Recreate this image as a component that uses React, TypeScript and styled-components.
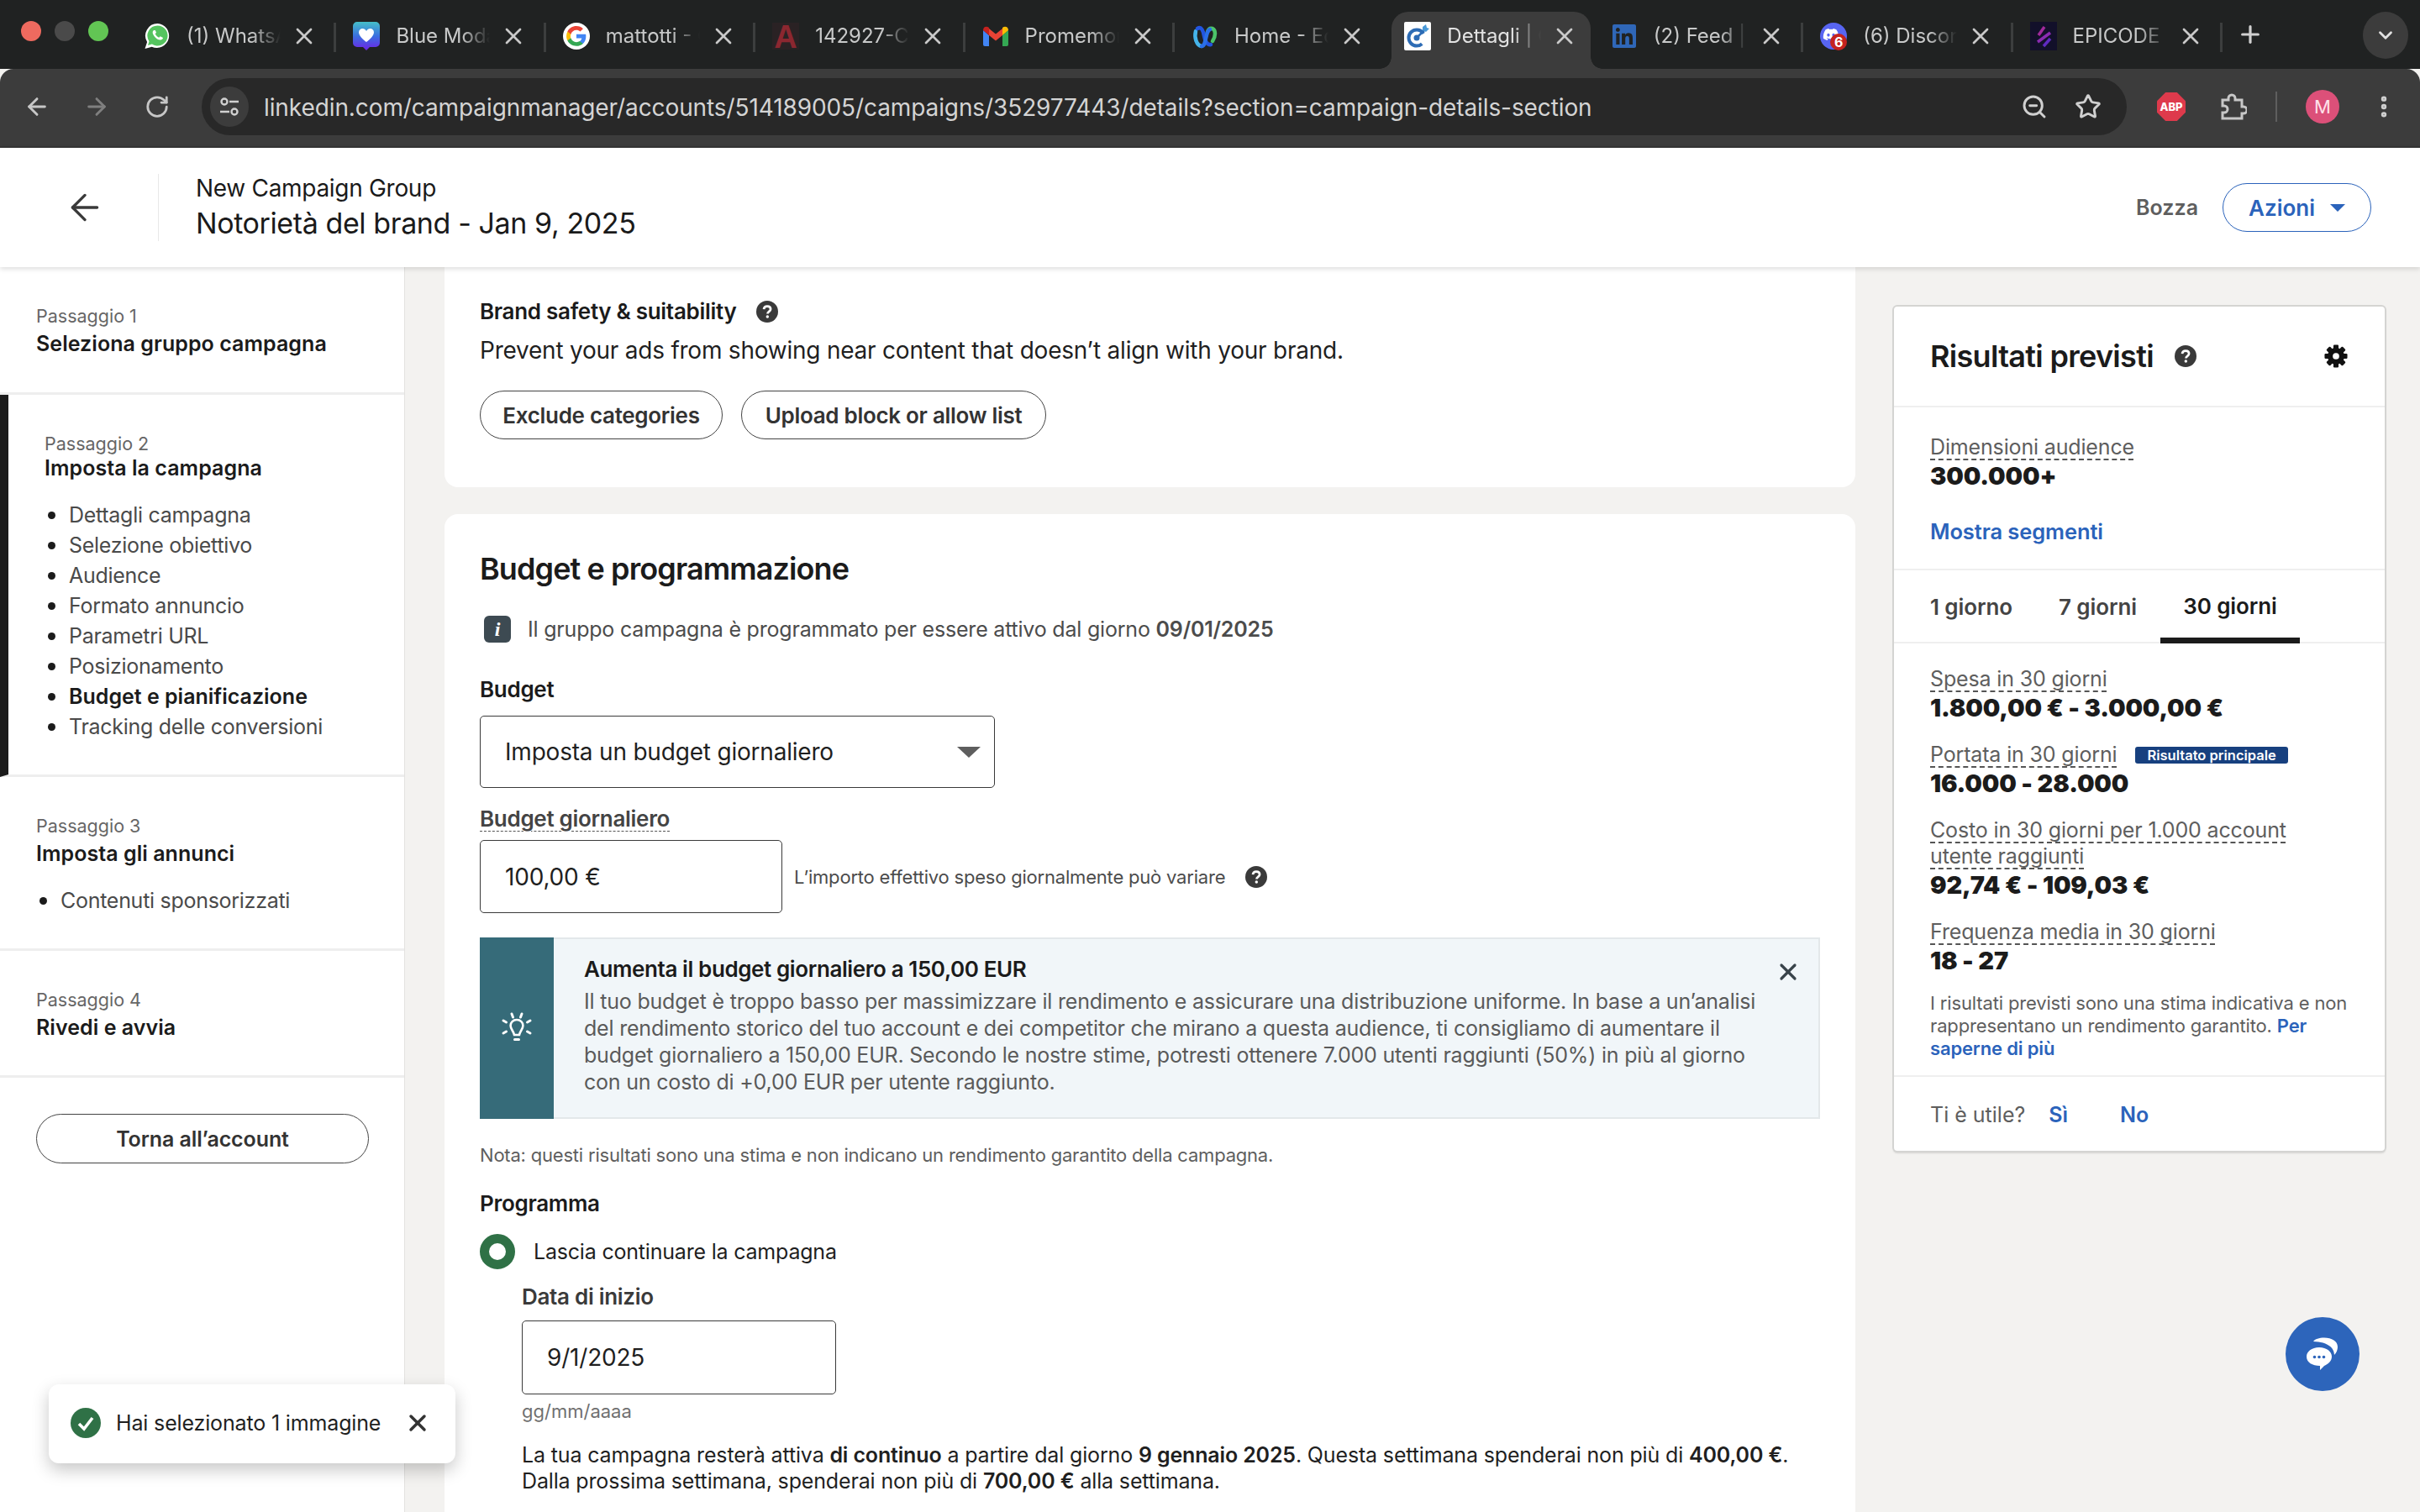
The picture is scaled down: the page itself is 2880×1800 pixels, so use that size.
import React from "react";
import styled, { createGlobalStyle } from "styled-components";
import { FaDiscord, FaLinkedin } from "react-icons/fa";
import { ArrowLeft, ArrowRight, ChevronDown, EllipsisVertical, Plus, RotateCw, Star, X, ZoomOut } from "lucide-react";

const GlobalStyle = createGlobalStyle`
  html, body {
    margin: 0;
    padding: 0;
    background: #f3f2f0;
  }
  * {
    box-sizing: border-box;
  }
  body {
    font-family: Inter, "Liberation Sans", sans-serif;
    color: #1a1a1a;
  }
`;

const Page = styled.div`
  width: 2880px;
  height: 1800px;
  overflow: hidden;
  position: relative;
  display: flex;
  flex-direction: column;
  background: #f3f2f0;
`;

/* browser chrome */
const TabStrip = styled.div`
  height: 82px;
  flex: none;
  background: #202222;
  display: flex;
  align-items: flex-start;
  padding-top: 14px;
  position: relative;
`;

const TrafficLights = styled.div`
  width: 150px;
  flex: none;
  display: flex;
  gap: 16px;
  padding: 11px 0 0 25px;
`;

const Light = styled.span<{ $color: string }>`
  width: 24px;
  height: 24px;
  border-radius: 50%;
  background: ${(p) => p.$color};
`;

const Tab = styled.div<{ $active?: boolean; $noSep?: boolean }>`
  width: 249.4px;
  height: 68px;
  flex: none;
  display: flex;
  align-items: flex-start;
  padding: 13px 0 0 ${(p) => (p.$active ? 25 : 21)}px;
  position: relative;
  color: ${(p) => (p.$active ? "#e2e2e2" : "#c8c9c9")};
  font-size: 24px;
  &::before {
    content: "";
    display: ${(p) => (p.$active ? "block" : "none")};
    position: absolute;
    left: 10px;
    right: 3px;
    top: 0;
    bottom: 0;
    background: #3c3c3c;
    border-radius: 20px 20px 0 0;
  }
  &::after {
    content: "";
    display: ${(p) => (p.$noSep && !p.$active ? "none" : "block")};
    position: absolute;
    ${(p) =>
      p.$active
        ? `left: -4px;
           right: -11px;
           bottom: 0;
           height: 14px;
           background:
             radial-gradient(circle at 0 0, transparent 13.5px, #3c3c3c 14px) left / 14px 14px no-repeat,
             radial-gradient(circle at 100% 0, transparent 13.5px, #3c3c3c 14px) right / 14px 14px no-repeat;`
        : `right: -1px;
           top: 13px;
           width: 3px;
           height: 35px;
           background: #3c3e3e;`}
  }
  > * {
    position: relative;
  }
`;

const Favicon = styled.span`
  width: 32px;
  height: 32px;
  flex: none;
  display: flex;
  align-items: center;
  justify-content: center;
`;

const TabTitle = styled.span`
  width: 112px;
  margin-left: 19px;
  line-height: 32px;
  overflow: hidden;
  white-space: nowrap;
  -webkit-mask-image: linear-gradient(to right, #000 70%, transparent 100%);
  mask-image: linear-gradient(to right, #000 70%, transparent 100%);
`;

const TabClose = styled.span`
  margin-left: 12px;
  height: 32px;
  display: flex;
  align-items: center;
  color: #c9c9c9;
`;

const NewTab = styled.span`
  margin: 11px 0 0 18px;
  color: #d0d0d0;
  display: flex;
`;

const TabSearch = styled.span`
  position: absolute;
  left: 2812px;
  top: 14px;
  width: 54px;
  height: 56px;
  border-radius: 50%;
  background: #3c3c3c;
  color: #e0e0e0;
  display: flex;
  align-items: center;
  justify-content: center;
`;

const Toolbar = styled.div`
  height: 94px;
  flex: none;
  background: #3c3c3c;
  border-bottom: 2px solid #353535;
  border-radius: 16px 16px 0 0;
  display: flex;
  align-items: center;
  padding: 0 0 2px 28px;
  color: #c7c7c7;
`;

const NavIcon = styled.span<{ $dim?: boolean; $w: number }>`
  width: ${(p) => p.$w}px;
  flex: none;
  display: flex;
  color: ${(p) => (p.$dim ? "#7f7f7f" : "#c7c7c7")};
`;

const Omnibox = styled.div`
  width: 2291px;
  height: 68px;
  flex: none;
  margin-left: -3px;
  border-radius: 34px;
  background: #282828;
  display: flex;
  align-items: center;
  padding-left: 10px;
`;

const SitePill = styled.span`
  width: 46px;
  height: 48px;
  flex: none;
  border-radius: 50%;
  background: #3c3c3c;
  display: flex;
  align-items: center;
  justify-content: center;
`;

const Url = styled.span`
  flex: 1;
  margin: 2px 0 0 18px;
  font-size: 28px;
  letter-spacing: -0.1px;
  color: #d4d4d4;
  white-space: nowrap;
`;

const OmniIcon = styled.span<{ $mr?: number; $ml?: number }>`
  display: flex;
  margin-right: ${(p) => p.$mr ?? 0}px;
  margin-left: ${(p) => p.$ml ?? 0}px;
  color: #d0d0d0;
`;

const ToolbarRight = styled.div`
  flex: 1;
  display: flex;
  align-items: center;
  padding-left: 36px;
`;

const Abp = styled.span`
  width: 34px;
  height: 34px;
  background: #de3a4c;
  clip-path: polygon(30% 0, 70% 0, 100% 30%, 100% 70%, 70% 100%, 30% 100%, 0 70%, 0 30%);
  color: #fff;
  font-size: 13px;
  font-weight: 800;
  display: flex;
  align-items: center;
  justify-content: center;
`;

const ToolbarDivider = styled.span`
  width: 2px;
  height: 36px;
  background: #5e5e5e;
  margin: 0 34px;
`;

const Avatar = styled.span`
  width: 40px;
  height: 40px;
  border-radius: 50%;
  background: #dc5079;
  color: #ffe2ea;
  font-size: 22px;
  display: flex;
  align-items: center;
  justify-content: center;
`;

/* page header */
const Header = styled.header`
  height: 142px;
  flex: none;
  background: #fff;
  position: relative;
  z-index: 2;
  box-shadow: 0 2px 6px rgba(0, 0, 0, 0.14);
  display: flex;
  align-items: center;
  padding-right: 58px;
`;

const BackCell = styled.div`
  width: 189px;
  height: 80px;
  flex: none;
  border-right: 1px solid #e8e8e8;
  display: flex;
  align-items: center;
  padding-left: 76px;
  color: #3a3a3a;
`;

const HeaderTitles = styled.div`
  flex: 1;
  padding-left: 44px;
`;

const GroupName = styled.div`
  font-size: 28px;
  line-height: 38px;
  letter-spacing: -0.3px;
`;

const CampaignName = styled.div`
  font-size: 34px;
  line-height: 46px;
  letter-spacing: -0.4px;
`;

const DraftLabel = styled.span`
  font-size: 25px;
  font-weight: 600;
  color: #5e5e5e;
  margin-right: 29px;
`;

const ActionsButton = styled.button`
  width: 177px;
  height: 58px;
  border: 1px solid #2b63bb;
  border-radius: 29px;
  background: #fff;
  color: #2b63bb;
  font: 600 26px Inter, sans-serif;
  display: flex;
  align-items: center;
  justify-content: center;
  gap: 18px;
`;

const Caret = styled.span`
  width: 0;
  height: 0;
  border-left: 9px solid transparent;
  border-right: 9px solid transparent;
  border-top: 9px solid #2b63bb;
`;

/* body */
const Body = styled.div`
  flex: 1;
  min-height: 0;
  display: grid;
  grid-template-columns: 482px 1726px 1fr;
`;

const Sidebar = styled.aside`
  background: #fff;
  border-right: 1px solid #e3e2e0;
  display: flex;
  flex-direction: column;
`;

const Step = styled.section<{ $height: number; $active?: boolean }>`
  height: ${(p) => p.$height}px;
  flex: none;
  border-bottom: 3px solid #eeeeee;
  border-left: ${(p) => (p.$active ? "10px solid #1b1b1b" : "0")};
  padding: 43px 0 0 43px;
`;

const StepLabel = styled.div`
  font-size: 21.500px;
  line-height: 30px;
  color: #666;
`;

const StepTitle = styled.div<{ $tight?: boolean }>`
  font-size: 25px;
  line-height: 36px;
  margin-top: ${(p) => (p.$tight ? -4 : 0)}px;
  font-weight: 600;
  color: #1b1b1b;
  letter-spacing: 0.05px;
`;

const StepList = styled.ul`
  margin: 20px 0 0;
  padding: 0 0 0 29px;
  list-style: none;
`;

const StepItem = styled.li<{ $current?: boolean }>`
  font-size: 25px;
  line-height: 36px;
  color: ${(p) => (p.$current ? "#1b1b1b" : "#4a4a4a")};
  font-weight: ${(p) => (p.$current ? 600 : 400)};
  letter-spacing: ${(p) => (p.$current ? "0" : "-0.28px")};
  position: relative;
  &::before {
    content: "";
    position: absolute;
    left: -25px;
    top: 14px;
    width: 9px;
    height: 9px;
    border-radius: 50%;
    background: #1b1b1b;
  }
`;

const BackToAccount = styled.button`
  width: 396px;
  height: 59px;
  margin: 43px 0 0 43px;
  border: 1px solid #444;
  border-radius: 30px;
  background: #fff;
  color: #333;
  font: 600 25px Inter, sans-serif;
  letter-spacing: -0.1px;
`;

const Center = styled.main`
  padding-left: 47px;
  display: flex;
  flex-direction: column;
  gap: 32px;
  min-width: 0;
`;

const Card = styled.div`
  background: #fff;
  border-radius: 16px;
  padding: 0 42px;
  flex: none;
  width: 1679px;
`;

const TopCard = styled(Card)`
  height: 262px;
  border-radius: 0 0 16px 16px;
  padding-top: 36px;
`;

const InlineRow = styled.div<{ $gap?: number }>`
  display: flex;
  align-items: center;
  gap: ${(p) => p.$gap ?? 0}px;
`;

const FieldLabel = styled.div<{ $color?: string; $mt?: number }>`
  font-size: 26px;
  line-height: 34px;
  font-weight: 600;
  letter-spacing: -0.3px;
  margin-top: ${(p) => p.$mt ?? 0}px;
  color: ${(p) => p.$color ?? "#1b1b1b"};
`;

const Lead = styled.div`
  font-size: 28px;
  line-height: 38px;
  letter-spacing: -0.23px;
  color: #1f1f1f;
  margin-top: 10px;
`;

const PillRow = styled.div`
  display: flex;
  gap: 22px;
  margin-top: 29px;
`;

const PillButton = styled.button<{ $w: number }>`
  width: ${(p) => p.$w}px;
  height: 58px;
  border: 1px solid #444;
  border-radius: 29px;
  background: #fff;
  color: #333;
  font: 600 26px Inter, sans-serif;
  letter-spacing: -0.3px;
`;

const MainCard = styled(Card)`
  flex: 1;
  border-radius: 16px 16px 0 0;
  padding-top: 43px;
`;

const SectionTitle = styled.h2`
  margin: 0;
  font-size: 36px;
  line-height: 44px;
  font-weight: 600;
  letter-spacing: -0.9px;
  color: #1b1b1b;
`;

const InfoRow = styled.div`
  display: flex;
  align-items: center;
  margin: 33px 0 0 5px;
  font-size: 25px;
  line-height: 34px;
  color: #4c4c4c;
  letter-spacing: -0.2px;
  gap: 20px;
  b {
    font-weight: 600;
  }
`;

const InfoBadge = styled.span`
  width: 32px;
  height: 32px;
  border-radius: 6px;
  background: #3d4a52;
  color: #fff;
  display: flex;
  align-items: center;
  justify-content: center;
  font: italic 700 24px "Liberation Serif", serif;
`;

const SelectBox = styled.div`
  width: 613px;
  height: 86px;
  margin-top: 14px;
  border: 1px solid #3a3a3a;
  border-radius: 5px;
  display: flex;
  align-items: center;
  justify-content: space-between;
  padding: 0 16px 0 29px;
  font-size: 28px;
  letter-spacing: -0.2px;
  color: #1f1f1f;
`;

const SelectCaret = styled.span`
  width: 0;
  height: 0;
  border-left: 14px solid transparent;
  border-right: 14px solid transparent;
  border-top: 13px solid #5e5e5e;
`;

const Dashed = styled.span<{ $thin?: boolean }>`
  text-decoration: underline dashed #555 ${(p) => (p.$thin ? 1 : 2)}px;
  text-underline-offset: 5px;
`;

const BudgetRow = styled.div`
  display: flex;
  align-items: center;
  margin-top: 8px;
`;

const TextBox = styled.div<{ $w: number }>`
  width: ${(p) => p.$w}px;
  height: 87px;
  flex: none;
  border: 1px solid #3a3a3a;
  border-radius: 5px;
  display: flex;
  align-items: center;
  padding-left: 29px;
  font-size: 28px;
  color: #1f1f1f;
  letter-spacing: -0.2px;
`;

const Hint = styled.span`
  margin: 0 24px 0 14px;
  font-size: 22px;
  color: #4c4c4c;
  letter-spacing: -0.2px;
`;

const Banner = styled.div`
  height: 216px;
  margin-top: 29px;
  display: flex;
  background: #f1f6f9;
  border: 2px solid #e3e8ea;
  border-left: 0;
  position: relative;
`;

const BannerIcon = styled.div`
  width: 88px;
  flex: none;
  background: #366b79;
  margin-top: -2px;
  margin-bottom: -2px;
  display: flex;
  align-items: center;
  justify-content: center;
  color: #fff;
`;

const BannerText = styled.div`
  padding: 20px 0 0 36px;
`;

const BannerHeading = styled.div`
  font-size: 26px;
  line-height: 32px;
  font-weight: 600;
  letter-spacing: -0.4px;
  color: #1b1b1b;
  margin-bottom: 6px;
`;

const BannerCopy = styled.div`
  font-size: 25px;
  line-height: 32px;
  color: #5a5a5a;
  letter-spacing: -0.2px;
  white-space: nowrap;
`;

const BannerClose = styled.span`
  position: absolute;
  right: 20px;
  top: 23px;
  color: #38434a;
  display: flex;
`;

const Note = styled.div`
  margin-top: 28px;
  font-size: 22px;
  line-height: 30px;
  color: #5e5e5e;
  letter-spacing: -0.2px;
`;

const RadioRow = styled.div`
  display: flex;
  align-items: center;
  gap: 22px;
  margin-top: 19px;
  font-size: 25px;
  color: #1f1f1f;
  letter-spacing: -0.2px;
`;

const Radio = styled.span`
  width: 42px;
  height: 42px;
  border-radius: 50%;
  border: 11px solid #2f7146;
  background: #fff;
  flex: none;
`;

const Indented = styled.div`
  padding-left: 50px;
`;

const DateBox = styled(TextBox)`
  margin-top: 11px;
  height: 88px;
`;

const DateHint = styled.div`
  margin-top: 5px;
  font-size: 22px;
  line-height: 30px;
  color: #707070;
`;

const Summary = styled.div`
  margin-top: 22px;
  font-size: 25px;
  line-height: 31px;
  letter-spacing: -0.15px;
  color: #1f1f1f;
  b {
    font-weight: 600;
  }
`;

const RightColumn = styled.div`
  padding: 47px 0 0 46px;
`;

const ResultsCard = styled.div`
  width: 584px;
  height: 1005px;
  background: #fff;
  border-radius: 4px;
  box-shadow: 0 0 0 2px #d4d4d2, 0 2px 3px rgba(0, 0, 0, 0.25);
`;

const ResultsHead = styled.div`
  height: 120px;
  border-bottom: 2px solid #efefef;
  display: flex;
  align-items: center;
  padding: 0 44px 0 43px;
`;

const ResultsTitle = styled.h3`
  margin: 0;
  flex: 1;
  font-size: 36px;
  font-weight: 600;
  letter-spacing: -0.7px;
  color: #1b1b1b;
  display: flex;
  align-items: center;
  gap: 25px;
`;

const AudienceBlock = styled.div`
  height: 194px;
  border-bottom: 2px solid #efefef;
  padding: 32px 0 0 43px;
`;

const MetricLabel = styled.div`
  font-size: 25px;
  line-height: 31px;
  color: #5e5e5e;
  letter-spacing: -0.15px;
`;

const MetricValue = styled.div`
  font-size: 29px;
  line-height: 34px;
  margin-top: 2px;
  font-weight: 900;
  color: #1b1b1b;
  letter-spacing: -0.15px;
`;

const LinkText = styled.div`
  margin-top: 32px;
  font-size: 25.500px;
  line-height: 34px;
  font-weight: 600;
  color: #2b63bb;
  letter-spacing: -0.1px;
`;

const PeriodTabs = styled.div`
  height: 87px;
  border-bottom: 2px solid #efefef;
  display: flex;
  padding-left: 43px;
`;

const PeriodTab = styled.div<{ $active?: boolean; $w: number }>`
  width: ${(p) => p.$w}px;
  height: 87px;
  flex: none;
  display: flex;
  align-items: center;
  justify-content: ${(p) => (p.$active ? "center" : "flex-start")};
  padding-top: ${(p) => (p.$active ? 5 : 0)}px;
  font-size: 26px;
  font-weight: 600;
  letter-spacing: -0.1px;
  color: ${(p) => (p.$active ? "#1b1b1b" : "#444")};
  border-bottom: ${(p) => (p.$active ? "7px solid #1b1b1b" : "0")};
`;

const Metrics = styled.div`
  height: 516px;
  border-bottom: 2px solid #efefef;
  padding: 27px 30px 0 43px;
`;

const Metric = styled.div`
  margin-bottom: 23px;
`;

const LabelRow = styled.div`
  display: flex;
  align-items: center;
  gap: 22px;
`;

const PrimaryBadge = styled.span`
  height: 20px;
  padding: 0 14px;
  border-radius: 3px;
  background: #17407f;
  color: #fff;
  font-size: 16.500px;
  font-weight: 600;
  line-height: 20px;
`;

const Disclaimer = styled.div`
  margin-top: -3px;
  font-size: 22px;
  line-height: 27px;
  color: #5e5e5e;
  letter-spacing: -0.15px;
  a {
    color: #2b63bb;
    font-weight: 600;
  }
`;

const Feedback = styled.div`
  height: 86px;
  display: flex;
  align-items: center;
  padding: 4px 0 0 43px;
  font-size: 25px;
  color: #5e5e5e;
`;

const FeedbackLink = styled.a<{ $ml: number }>`
  margin-left: ${(p) => p.$ml}px;
  color: #2b63bb;
  font-weight: 600;
`;

/* floating bits */
const Toast = styled.div`
  position: absolute;
  left: 58px;
  top: 1648px;
  width: 484px;
  height: 94px;
  z-index: 3;
  background: #fff;
  border-radius: 12px;
  box-shadow: 0 8px 20px rgba(0, 0, 0, 0.22);
  display: flex;
  align-items: center;
  padding: 0 0 3px 26px;
  font-size: 25px;
  letter-spacing: -0.15px;
  color: #1f1f1f;
  gap: 18px;
`;

const ToastClose = styled.span`
  margin-left: 10px;
  color: #333;
  display: flex;
`;

const ChatButton = styled.div`
  position: absolute;
  left: 2720px;
  top: 1568px;
  width: 88px;
  height: 88px;
  border-radius: 50%;
  background: #2d65bb;
  display: flex;
`;

const DiscordWrap = styled.span`
  position: relative;
  display: flex;
`;

const DiscordGlyph = styled.span`
  position: absolute;
  left: 3px;
  top: 4px;
  display: flex;
`;

const DiscordCount = styled.span`
  position: absolute;
  right: 0;
  bottom: -1px;
  width: 20px;
  height: 20px;
  border-radius: 50%;
  background: #c5221f;
  color: #fff;
  font-size: 16px;
  font-weight: 700;
  display: flex;
  align-items: center;
  justify-content: center;
`;

function HelpIcon({ size = 26, color = "#3a3a3a" }: { size?: number; color?: string }) {
  return (
    <svg width={size} height={size} viewBox="0 0 24 24">
      <circle cx="12" cy="12" r="12" fill={color} />
      <path d="M8.300 9.400c.2-2 1.800-3.200 3.800-3.200 2.100 0 3.700 1.200 3.700 3.100 0 2.600-3.200 2.600-3.400 5" fill="none" stroke="#fff" strokeWidth="2.500" />
      <circle cx="12.300" cy="17.600" r="1.600" fill="#fff" />
    </svg>
  );
}

function GearIcon() {
  return (
    <svg width="28" height="28" viewBox="0 0 24 24">
      <g fill="#111">
        <circle cx="12" cy="12" r="8.600" />
        {[0, 45, 90, 135, 180, 225, 270, 315].map((a) => (
          <rect key={a} x="9.400" y="0.400" width="5.200" height="6" rx="1" transform={`rotate(${a} 12 12)`} />
        ))}
      </g>
      <circle cx="12" cy="12" r="3.300" fill="#fff" />
    </svg>
  );
}

function BulbIcon() {
  return (
    <svg width="38" height="38" viewBox="0 0 38 38" fill="none" stroke="#fff" strokeWidth="2.600" strokeLinecap="round">
      <path d="M19 9c-4.500 0-7.400 3.200-7.400 7 0 4 3.400 6.200 4.400 11h6c1-4.800 4.400-7 4.400-11 0-3.800-2.900-7-7.400-7z" />
      <path d="M16.500 32.500h5M13 2l1.500 4M25 2l-1.500 4M3 10l3.500 2M35 10l-3.500 2M3 25l3.500-2M35 25l-3.500-2" strokeWidth="3" />
    </svg>
  );
}

function SiteSettingsIcon() {
  return (
    <svg width="26" height="26" viewBox="0 0 26 26" fill="none" stroke="#d0d0d0" strokeWidth="2.400">
      <circle cx="7" cy="7" r="3.500" />
      <path d="M13 7h11M2 19h11" />
      <circle cx="19" cy="19" r="3.500" />
    </svg>
  );
}

function ExtensionIcon() {
  return (
    <svg width="34" height="34" viewBox="0 0 34 34" fill="none" stroke="#c7c7c7" strokeWidth="3">
      <path d="M5 9h7V7a4 4 0 0 1 8 0v2h8v8h2a4 4 0 0 1 0 8h-2v6H5v-7h2a4 4 0 0 0 0-8H5z" />
    </svg>
  );
}

function WhatsappFav() {
  return (
    <svg width="34" height="34" viewBox="0 0 32 32">
      <path d="M16.500 1a14.500 14.500 0 0 0-12.400 22L1.500 31l8.200-2.300A14.500 14.500 0 1 0 16.500 1z" fill="#fff" />
      <path d="M16.500 3.500a12 12 0 0 0-10 18.700L5 27l4.900-1.500A12 12 0 1 0 16.500 3.500z" fill="#55c45f" />
      <path d="M12 9c-2 1.500-1.800 4 .5 7 2.500 3.300 5.500 5 8 4.500 1.500-.3 2.500-1.500 2.500-2.500l-3.300-1.800-1.500 1.500c-2-.8-3.500-2.500-4.500-4.500l1.300-1.500L13.700 9z" fill="#fff" />
    </svg>
  );
}

function BlueModFav() {
  return (
    <svg width="32" height="34" viewBox="0 0 32 34">
      <defs>
        <linearGradient id="bm" x1="0" y1="0" x2="0" y2="1">
          <stop offset="0" stopColor="#45bfc9" />
          <stop offset="0.5" stopColor="#3a6fe0" />
          <stop offset="1" stopColor="#6f22e6" />
        </linearGradient>
      </defs>
      <path d="M5 0h22a5 5 0 0 1 5 5v20a5 5 0 0 1-5 5h-7l-4 4-4-4H5a5 5 0 0 1-5-5V5a5 5 0 0 1 5-5z" fill="url(#bm)" />
      <path d="M16 24S7 18 7 12.500C7 9.500 9.300 8 11.300 8c2 0 3.700 1.300 4.700 3 1-1.700 2.700-3 4.700-3 2 0 4.300 1.500 4.300 4.500C25 18 16 24 16 24z" fill="#fff" />
    </svg>
  );
}

function GoogleFav() {
  return (
    <svg width="32" height="32" viewBox="0 0 48 48">
      <circle cx="24" cy="24" r="24" fill="#fff" />
      <g transform="translate(4.500 4.500) scale(.81)">
        <path fill="#4285f4" d="M45.100 24.500c0-1.600-.1-3.100-.4-4.500H24v8.500h11.800c-.5 2.800-2 5.100-4.400 6.700v5.600h7.100c4.200-3.800 6.600-9.500 6.600-16.300z" />
        <path fill="#34a853" d="M24 46c5.900 0 10.900-2 14.500-5.300l-7.100-5.500c-2 1.300-4.500 2.100-7.400 2.100-5.700 0-10.500-3.800-12.300-9h-7.300v5.700C8 41.100 15.400 46 24 46z" />
        <path fill="#fbbc05" d="M11.700 28.300c-.4-1.300-.7-2.700-.7-4.300s.3-3 .7-4.300V14H4.400C2.900 17 2 20.400 2 24s.9 7 2.400 10l7.300-5.700z" />
        <path fill="#ea4335" d="M24 10.700c3.200 0 6.100 1.100 8.400 3.300l6.300-6.300C34.900 4.200 29.900 2 24 2 15.400 2 8 6.900 4.400 14l7.300 5.700c1.800-5.200 6.600-9 12.300-9z" />
      </g>
    </svg>
  );
}

function AcrobatFav() {
  return (
    <svg width="32" height="32" viewBox="0 0 32 32">
      <rect width="32" height="32" fill="#2a2224" />
      <text x="16" y="30" textAnchor="middle" fontFamily="Liberation Sans" fontWeight="700" fontSize="38" fill="#8c2730">A</text>
    </svg>
  );
}

function GmailFav() {
  return (
    <svg width="32" height="32" viewBox="0 0 32 32">
      <path d="M1 9v17a2 2 0 0 0 2 2h5V15z" fill="#4285f4" />
      <path d="M24 15v13h5a2 2 0 0 0 2-2V9z" fill="#34a853" />
      <path d="M8 15V7l8 6.500L24 7v8l-8 6.500z" fill="#ea4335" />
      <path d="M1 9c0-4 4-5.500 7-3v9z" fill="#c5221f" />
      <path d="M24 6c3-2.500 7-1 7 3l-7 6z" fill="#fbbc05" />
    </svg>
  );
}

function HomeFav() {
  return (
    <svg width="32" height="32" viewBox="0 0 32 32" fill="none" strokeWidth="4.500" strokeLinecap="round">
      <path d="M5 10c-2 8 1 17 7 18" stroke="#45b4ea" />
      <path d="M25 22c4-6 4-13 0-15-3-1-5 1-6 4" stroke="#4cc46a" />
      <path d="M7 7c5-3 7 3 8 9 1 6 4 11 8 10" stroke="#2255e0" />
      <path d="M12 28c6 0 4-18 10-20" stroke="#2a6fe8" />
    </svg>
  );
}

function TargetFav() {
  return (
    <svg width="32" height="34" viewBox="0 0 32 34">
      <rect width="32" height="34" rx="2" fill="#fff" />
      <circle cx="15" cy="19" r="9.500" fill="none" stroke="#2d6cb5" strokeWidth="4" strokeDasharray="46 14" strokeDashoffset="-8" />
      <circle cx="15" cy="19" r="3.500" fill="#2d6cb5" />
      <path d="M15 19l10-10" stroke="#2d6cb5" strokeWidth="2.500" />
      <path d="M22 6l4-3 1 4 3 1-4 4-4-2z" fill="#4a9ad8" />
    </svg>
  );
}

function DiscordFav() {
  return (
    <DiscordWrap>
      <svg width="32" height="32" viewBox="0 0 32 32">
        <circle cx="16" cy="16" r="16" fill="#5865f2" />
      </svg>
      <DiscordGlyph>
        <FaDiscord size={20} color="#fff" />
      </DiscordGlyph>
      <DiscordCount>6</DiscordCount>
    </DiscordWrap>
  );
}

function EpicodeFav() {
  return (
    <svg width="32" height="34" viewBox="0 0 32 34" fill="none" strokeWidth="3.500">
      <rect width="32" height="34" fill="#12102a" />
      <path d="M17 6l-7 10" stroke="#a12a9c" />
      <path d="M24 13L9 24" stroke="#8a2bb0" />
      <path d="M24 20l-8 9" stroke="#5f2bc0" />
    </svg>
  );
}

function ChatIcon() {
  return (
    <svg width="88" height="88" viewBox="0 0 88 88">
      <path d="M33 29c2-3 7-4.500 13-4.500 9 0 16 4 16 11 0 3.500-1.500 7-4 9.500 0-8-7-15.500-25-16z" fill="#fff" />
      <path d="M25 47c0-6 6-11 15-11s15 5 15 11c0 6-5 9-9 11l-5 5v-5c-9 0-16-4-16-11z" fill="#fff" />
      <circle cx="34.500" cy="47.500" r="1.800" fill="#2d65bb" />
      <circle cx="40" cy="47.500" r="1.800" fill="#2d65bb" />
      <circle cx="45.500" cy="47.500" r="1.800" fill="#2d65bb" />
    </svg>
  );
}

const tabs = [
  { title: "(1) WhatsApp", icon: <WhatsappFav /> },
  { title: "Blue Moda", icon: <BlueModFav /> },
  { title: "mattotti - Ce", icon: <GoogleFav /> },
  { title: "142927-Cat", icon: <AcrobatFav /> },
  { title: "Promemoria", icon: <GmailFav /> },
  { title: "Home - Edit", icon: <HomeFav />, noSep: true },
  { title: "Dettagli | Ca", icon: <TargetFav />, active: true },
  { title: "(2) Feed | Li", icon: <FaLinkedin size={32} color="#2f67b8" /> },
  { title: "(6) Discord", icon: <DiscordFav /> },
  { title: "EPICODE", icon: <EpicodeFav /> },
];

const stepTwoItems = [
  "Dettagli campagna",
  "Selezione obiettivo",
  "Audience",
  "Formato annuncio",
  "Parametri URL",
  "Posizionamento",
  "Budget e pianificazione",
  "Tracking delle conversioni",
];

export default function App() {
  return (
    <Page>
      <GlobalStyle />
      <TabStrip>
        <TrafficLights>
          <Light $color="#ee6a5f" />
          <Light $color="#4a4a4a" />
          <Light $color="#62c554" />
        </TrafficLights>
        {tabs.map((t) => (
          <Tab key={t.title} $active={t.active} $noSep={t.noSep}>
            <Favicon>{t.icon}</Favicon>
            <TabTitle>{t.title}</TabTitle>
            <TabClose>
              <X size={32} strokeWidth={2} />
            </TabClose>
          </Tab>
        ))}
        <NewTab>
          <Plus size={32} strokeWidth={2.4} />
        </NewTab>
        <TabSearch>
          <ChevronDown size={26} strokeWidth={2.6} />
        </TabSearch>
      </TabStrip>

      <Toolbar>
        <NavIcon $w={71}>
          <ArrowLeft size={32} strokeWidth={2.2} />
        </NavIcon>
        <NavIcon $w={73} $dim>
          <ArrowRight size={32} strokeWidth={2.2} />
        </NavIcon>
        <NavIcon $w={71}>
          <RotateCw size={30} strokeWidth={2.2} />
        </NavIcon>
        <Omnibox>
          <SitePill>
            <SiteSettingsIcon />
          </SitePill>
          <Url>linkedin.com/campaignmanager/accounts/514189005/campaigns/352977443/details?section=campaign-details-section</Url>
          <OmniIcon $mr={32}>
            <ZoomOut size={32} strokeWidth={2.2} />
          </OmniIcon>
          <OmniIcon $mr={30}>
            <Star size={32} strokeWidth={2.2} />
          </OmniIcon>
        </Omnibox>
        <ToolbarRight>
          <Abp>ABP</Abp>
          <OmniIcon $ml={39}>
            <ExtensionIcon />
          </OmniIcon>
          <ToolbarDivider />
          <Avatar>M</Avatar>
          <OmniIcon $ml={37}>
            <EllipsisVertical size={32} strokeWidth={2.8} />
          </OmniIcon>
        </ToolbarRight>
      </Toolbar>

      <Header>
        <BackCell>
          <ArrowLeft size={50} strokeWidth={1.6} />
        </BackCell>
        <HeaderTitles>
          <GroupName>New Campaign Group</GroupName>
          <CampaignName>Notorietà del brand - Jan 9, 2025</CampaignName>
        </HeaderTitles>
        <DraftLabel>Bozza</DraftLabel>
        <ActionsButton>
          Azioni
          <Caret />
        </ActionsButton>
      </Header>

      <Body>
        <Sidebar>
          <Step $height={152}>
            <StepLabel>Passaggio 1</StepLabel>
            <StepTitle>Seleziona gruppo campagna</StepTitle>
          </Step>
          <Step $height={455} $active>
            <StepLabel>Passaggio 2</StepLabel>
            <StepTitle $tight>Imposta la campagna</StepTitle>
            <StepList>
              {stepTwoItems.map((item) => (
                <StepItem key={item} $current={item === "Budget e pianificazione"}>
                  {item}
                </StepItem>
              ))}
            </StepList>
          </Step>
          <Step $height={207}>
            <StepLabel>Passaggio 3</StepLabel>
            <StepTitle>Imposta gli annunci</StepTitle>
            <StepList>
              <StepItem>Contenuti sponsorizzati</StepItem>
            </StepList>
          </Step>
          <Step $height={151}>
            <StepLabel>Passaggio 4</StepLabel>
            <StepTitle>Rivedi e avvia</StepTitle>
          </Step>
          <BackToAccount>Torna all’account</BackToAccount>
        </Sidebar>

        <Center>
          <TopCard>
            <InlineRow $gap={24}>
              <FieldLabel>Brand safety &amp; suitability</FieldLabel>
              <HelpIcon />
            </InlineRow>
            <Lead>Prevent your ads from showing near content that doesn’t align with your brand.</Lead>
            <PillRow>
              <PillButton $w={289}>Exclude categories</PillButton>
              <PillButton $w={363}>Upload block or allow list</PillButton>
            </PillRow>
          </TopCard>
          <MainCard>
            <SectionTitle>Budget e programmazione</SectionTitle>
            <InfoRow>
              <InfoBadge>i</InfoBadge>
              <span>
                Il gruppo campagna è programmato per essere attivo dal giorno <b>09/01/2025</b>
              </span>
            </InfoRow>
            <FieldLabel $mt={38}>Budget</FieldLabel>
            <SelectBox>
              Imposta un budget giornaliero
              <SelectCaret />
            </SelectBox>
            <FieldLabel $mt={20} $color="#444">
              <Dashed $thin>Budget giornaliero</Dashed>
            </FieldLabel>
            <BudgetRow>
              <TextBox $w={360}>100,00 €</TextBox>
              <Hint>L’importo effettivo speso giornalmente può variare</Hint>
              <HelpIcon />
            </BudgetRow>
            <Banner>
              <BannerIcon>
                <BulbIcon />
              </BannerIcon>
              <BannerText>
                <BannerHeading>Aumenta il budget giornaliero a 150,00 EUR</BannerHeading>
                <BannerCopy>
                  Il tuo budget è troppo basso per massimizzare il rendimento e assicurare una distribuzione uniforme. In base a un’analisi
                  <br />
                  del rendimento storico del tuo account e dei competitor che mirano a questa audience, ti consigliamo di aumentare il
                  <br />
                  budget giornaliero a 150,00 EUR. Secondo le nostre stime, potresti ottenere 7.000 utenti raggiunti (50%) in più al giorno
                  <br />
                  con un costo di +0,00 EUR per utente raggiunto.
                </BannerCopy>
              </BannerText>
              <BannerClose>
                <X size={32} strokeWidth={2.4} />
              </BannerClose>
            </Banner>
            <Note>Nota: questi risultati sono una stima e non indicano un rendimento garantito della campagna.</Note>
            <FieldLabel $mt={26}>Programma</FieldLabel>
            <RadioRow>
              <Radio />
              Lascia continuare la campagna
            </RadioRow>
            <Indented>
              <FieldLabel $mt={16} $color="#3a3a3a">Data di inizio</FieldLabel>
              <DateBox $w={374}>9/1/2025</DateBox>
              <DateHint>gg/mm/aaaa</DateHint>
              <Summary>
                La tua campagna resterà attiva <b>di continuo</b> a partire dal giorno <b>9 gennaio 2025</b>. Questa settimana spenderai non più di <b>400,00 €</b>.
                <br />
                Dalla prossima settimana, spenderai non più di <b>700,00 €</b> alla settimana.
              </Summary>
            </Indented>
          </MainCard>
        </Center>

        <RightColumn>
          <ResultsCard>
            <ResultsHead>
              <ResultsTitle>
                Risultati previsti
                <HelpIcon />
              </ResultsTitle>
              <GearIcon />
            </ResultsHead>
            <AudienceBlock>
              <MetricLabel>
                <Dashed>Dimensioni audience</Dashed>
              </MetricLabel>
              <MetricValue>300.000+</MetricValue>
              <LinkText>Mostra segmenti</LinkText>
            </AudienceBlock>
            <PeriodTabs>
              <PeriodTab $w={153}>1 giorno</PeriodTab>
              <PeriodTab $w={121}>7 giorni</PeriodTab>
              <PeriodTab $w={166} $active>30 giorni</PeriodTab>
            </PeriodTabs>
            <Metrics>
              <Metric>
                <MetricLabel>
                  <Dashed>Spesa in 30 giorni</Dashed>
                </MetricLabel>
                <MetricValue>1.800,00 € - 3.000,00 €</MetricValue>
              </Metric>
              <Metric>
                <LabelRow>
                  <MetricLabel>
                    <Dashed>Portata in 30 giorni</Dashed>
                  </MetricLabel>
                  <PrimaryBadge>Risultato principale</PrimaryBadge>
                </LabelRow>
                <MetricValue>16.000 - 28.000</MetricValue>
              </Metric>
              <Metric>
                <MetricLabel>
                  <Dashed>
                    Costo in 30 giorni per 1.000 account
                    <br />
                    utente raggiunti
                  </Dashed>
                </MetricLabel>
                <MetricValue>92,74 € - 109,03 €</MetricValue>
              </Metric>
              <Metric>
                <MetricLabel>
                  <Dashed>Frequenza media in 30 giorni</Dashed>
                </MetricLabel>
                <MetricValue>18 - 27</MetricValue>
              </Metric>
              <Disclaimer>
                I risultati previsti sono una stima indicativa e non rappresentano un rendimento garantito. <a>Per saperne di più</a>
              </Disclaimer>
            </Metrics>
            <Feedback>
              Ti è utile?
              <FeedbackLink $ml={28}>Sì</FeedbackLink>
              <FeedbackLink $ml={62}>No</FeedbackLink>
            </Feedback>
          </ResultsCard>
        </RightColumn>
      </Body>

      <Toast>
        <svg width="36" height="36" viewBox="0 0 36 36">
          <circle cx="18" cy="18" r="18" fill="#2f7146" />
          <path d="M10 19l6 6 10-13" fill="none" stroke="#fff" strokeWidth="3.600" />
        </svg>
        <span>Hai selezionato 1 immagine</span>
        <ToastClose>
          <X size={32} strokeWidth={2.6} />
        </ToastClose>
      </Toast>
      <ChatButton>
        <ChatIcon />
      </ChatButton>
    </Page>
  );
}
